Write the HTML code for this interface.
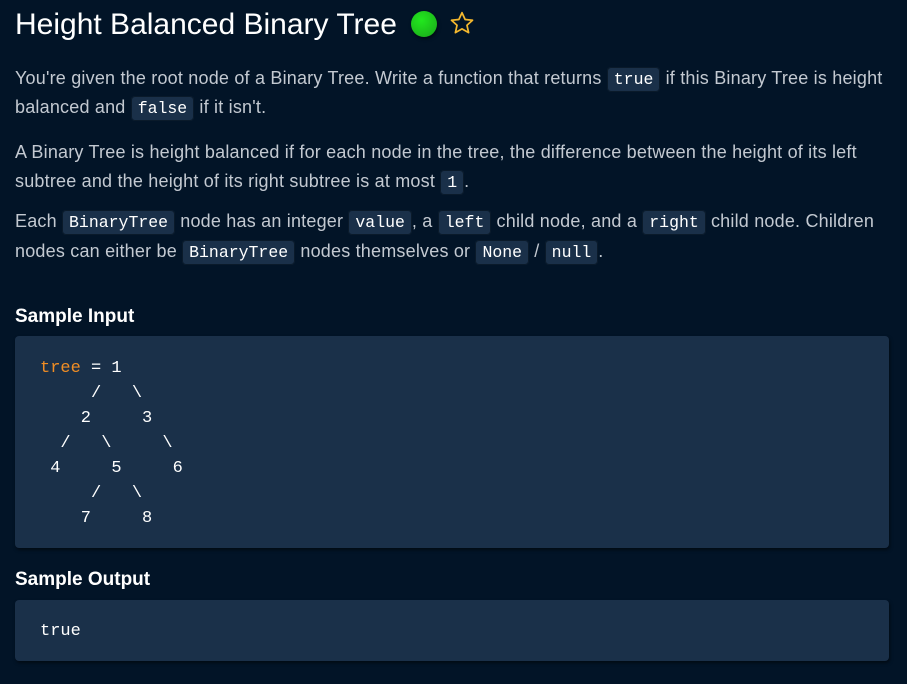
<!DOCTYPE html>
<html><head><style>
html,body{margin:0;padding:0;background:#021427;width:907px;height:684px;overflow:hidden}
body{font-family:"Liberation Sans",sans-serif;color:#c3c9d1}
h1{position:absolute;left:15px;top:4px;margin:0;font-size:30px;font-weight:normal;color:#fff;letter-spacing:0;white-space:nowrap;line-height:42px}
.dot{position:absolute;left:411px;top:11px;width:26px;height:26px;border-radius:50%;background:radial-gradient(circle at 40% 35%,#22e81e,#1aa61a);box-shadow:1px 2px 3px rgba(0,0,0,.5)}
.star{position:absolute;left:449px;top:10px}
.p{position:absolute;left:15px;font-size:18px;line-height:29px;white-space:nowrap;letter-spacing:0.2px}
code{font-family:"Liberation Mono",monospace;font-size:16.5px;color:#fff;background:#1a3049;border:1px solid #0a1a2a;border-radius:4px;padding:2px 6px;letter-spacing:0}
h2{position:absolute;left:15px;margin:0;font-size:19px;font-weight:bold;color:#fff;line-height:24px;letter-spacing:0}
.box{position:absolute;left:15px;width:874px;background:#1a3049;border-radius:4px;box-shadow:1px 2px 3px rgba(0,0,0,.5)}
pre{margin:0;font-family:"Liberation Mono",monospace;font-size:17px;line-height:25px;color:#fff;position:absolute;left:25px}
.o{color:#f08d24}
</style></head><body>
<h1>Height Balanced Binary Tree</h1>
<span class="dot"></span>
<svg class="star" width="26" height="26" viewBox="0 0 24 24"><path d="M12 2.5l2.9 6.3 6.8.7-5.1 4.6 1.5 6.8L12 17.4l-6.1 3.5 1.5-6.8L2.3 9.5l6.8-.7z" fill="none" stroke="#f5b82e" stroke-width="1.6" stroke-linejoin="round"/></svg>
<div class="p" style="top:64px">You're given the root node of a Binary Tree. Write a function that returns <code>true</code> if this Binary Tree is height</div>
<div class="p" style="top:93px">balanced and <code>false</code> if it isn't.</div>
<div class="p" style="top:138px">A Binary Tree is height balanced if for each node in the tree, the difference between the height of its left</div>
<div class="p" style="top:167px">subtree and the height of its right subtree is at most <code>1</code>.</div>
<div class="p" style="top:207px">Each <code>BinaryTree</code> node has an integer <code>value</code>, a <code>left</code> child node, and a <code>right</code> child node. Children</div>
<div class="p" style="top:237px">nodes can either be <code>BinaryTree</code> nodes themselves or <code>None</code> / <code>null</code>.</div>
<h2 style="top:305px">Sample Input</h2>
<div class="box" style="top:336px;height:212px">
<pre style="top:20px"><span class="o">tree</span> = 1
     /   \
    2     3
  /   \     \
 4     5     6
     /   \
    7     8</pre>
</div>
<h2 style="top:568px">Sample Output</h2>
<div class="box" style="top:600px;height:61px"><pre style="top:19px">true</pre></div>
</body></html>
